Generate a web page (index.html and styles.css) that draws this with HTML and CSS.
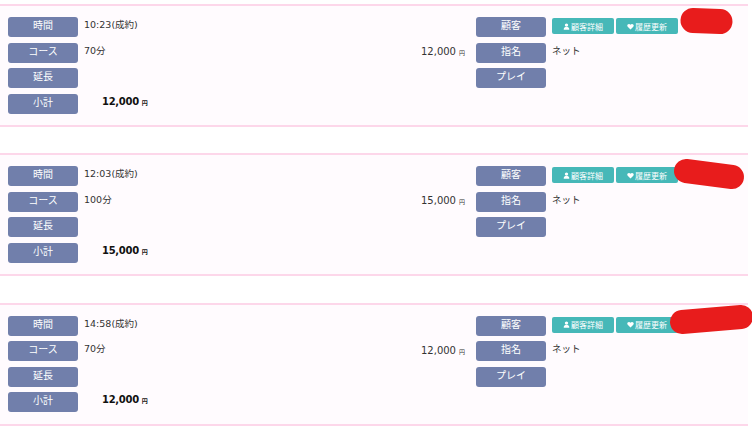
FILE: index.html
```html
<!DOCTYPE html>
<html lang="ja">
<head>
    <meta charset="UTF-8">
    <title>予約一覧</title>
    <link rel="stylesheet" href="styles.css">
</head>
<body>
    <div class="list">
        <div class="card">
            <div class="col">
                <div class="row"><span class="label">時間</span><span class="value">10:23(成約)</span></div>
                <div class="row"><span class="label">コース</span><span class="value">70分</span></div>
                <div class="row"><span class="label">延長</span></div>
                <div class="row"><span class="label">小計</span><span class="total">12,000<small>円</small></span></div>
            </div>
            <div class="price">12,000<small>円</small></div>
            <div class="col">
                <div class="row">
                    <span class="label">顧客</span>
                    <a class="btn"><svg viewBox="0 0 10 10"><circle cx="5" cy="3" r="2.4"/><path d="M1 9.5c0-3 1.6-3.8 4-3.8s4 .8 4 3.8z"/></svg>顧客詳細</a>
                    <a class="btn"><svg viewBox="0 0 10 10"><path d="M5 9.2 1 5.2C-.4 3.600.8 1.400 2.800 1.400 3.800 1.400 4.500 1.900 5 2.600 5.500 1.900 6.200 1.400 7.200 1.400c2 0 3.200 2.200 1.800 3.800z"/></svg>履歴更新</a>
                </div>
                <div class="row"><span class="label">指名</span><span class="value">ネット</span></div>
                <div class="row"><span class="label">プレイ</span></div>
            </div>
            <svg class="scribble scribble-thick" viewBox="0 0 752 123"><path d="M693 14.500 L720 15.500"/></svg>
        </div>

        <div class="card">
            <div class="col">
                <div class="row"><span class="label">時間</span><span class="value">12:03(成約)</span></div>
                <div class="row"><span class="label">コース</span><span class="value">100分</span></div>
                <div class="row"><span class="label">延長</span></div>
                <div class="row"><span class="label">小計</span><span class="total">15,000<small>円</small></span></div>
            </div>
            <div class="price">15,000<small>円</small></div>
            <div class="col">
                <div class="row">
                    <span class="label">顧客</span>
                    <a class="btn"><svg viewBox="0 0 10 10"><circle cx="5" cy="3" r="2.4"/><path d="M1 9.5c0-3 1.6-3.8 4-3.8s4 .8 4 3.8z"/></svg>顧客詳細</a>
                    <a class="btn"><svg viewBox="0 0 10 10"><path d="M5 9.2 1 5.2C-.4 3.600.8 1.400 2.800 1.400 3.800 1.400 4.500 1.900 5 2.600 5.500 1.900 6.200 1.400 7.200 1.400c2 0 3.200 2.200 1.800 3.800z"/></svg>履歴更新</a>
                </div>
                <div class="row"><span class="label">指名</span><span class="value">ネット</span></div>
                <div class="row"><span class="label">プレイ</span></div>
            </div>
            <svg class="scribble" viewBox="0 0 752 123"><path d="M686 16 L732 22"/></svg>
        </div>

        <div class="card">
            <div class="col">
                <div class="row"><span class="label">時間</span><span class="value">14:58(成約)</span></div>
                <div class="row"><span class="label">コース</span><span class="value">70分</span></div>
                <div class="row"><span class="label">延長</span></div>
                <div class="row"><span class="label">小計</span><span class="total">12,000<small>円</small></span></div>
            </div>
            <div class="price">12,000<small>円</small></div>
            <div class="col">
                <div class="row">
                    <span class="label">顧客</span>
                    <a class="btn"><svg viewBox="0 0 10 10"><circle cx="5" cy="3" r="2.4"/><path d="M1 9.5c0-3 1.6-3.8 4-3.8s4 .8 4 3.8z"/></svg>顧客詳細</a>
                    <a class="btn"><svg viewBox="0 0 10 10"><path d="M5 9.2 1 5.2C-.4 3.600.8 1.400 2.800 1.400 3.800 1.400 4.500 1.900 5 2.600 5.500 1.900 6.200 1.400 7.200 1.400c2 0 3.200 2.200 1.800 3.800z"/></svg>履歴更新</a>
                </div>
                <div class="row"><span class="label">指名</span><span class="value">ネット</span></div>
                <div class="row"><span class="label">プレイ</span></div>
            </div>
            <svg class="scribble" viewBox="0 0 752 123"><path d="M682 17 L741 12"/></svg>
        </div>
    </div>
</body>
</html>
```

FILE: styles.css
```css
body {
    margin: 0;
    background-color: #ffffff;
    font-family: 'DejaVu Sans', 'Noto Sans CJK JP', sans-serif;
    color: #333333;
}
.list {
    width: 748px;
    padding-top: 4px;
}
.card {
    position: relative;
    display: flex;
    box-sizing: border-box;
    height: 123px;
    margin-bottom: 26.400px;
    padding: 11px 0 0 8px;
    background-color: #fffbfe;
    border-top: 2px solid #fdd7ea;
    border-bottom: 2px solid #fdd7ea;
}
.col {
    display: flex;
    flex-direction: column;
    gap: 5.500px;
    width: 270px;
}
.row {
    display: flex;
    height: 20px;
}
.label {
    flex: none;
    width: 70px;
    height: 20px;
    margin-right: 6px;
    border-radius: 3px;
    background-color: #717fab;
    color: #ffffff;
    font-size: 10px;
    line-height: 18px;
    text-align: center;
}
.value {
    font-size: 9.500px;
    line-height: 16px;
}
.total {
    padding-left: 18px;
    color: #111111;
    font-size: 10px;
    font-weight: bold;
    letter-spacing: -0.300px;
    line-height: 16px;
}
.price {
    flex: none;
    width: 187px;
    margin-right: 11px;
    padding-top: 27px;
    font-size: 10px;
    line-height: 16px;
    text-align: right;
}
small {
    margin-left: 3px;
    font-size: 6px;
}
.btn {
    display: flex;
    justify-content: center;
    align-items: center;
    gap: 1px;
    box-sizing: border-box;
    width: 62px;
    height: 16px;
    margin: 1px 2px 0 0;
    border-radius: 2px;
    background-color: #46b8b8;
    color: #ffffff;
    font-size: 8px;
}
.btn svg {
    width: 7px;
    height: 7px;
    fill: #ffffff;
}
.scribble {
    position: absolute;
    top: 0;
    left: 0;
    width: 752px;
    height: 123px;
    overflow: visible;
}
.scribble path {
    fill: none;
    stroke: #e81c1c;
    stroke-width: 24;
    stroke-linecap: round;
}
.scribble-thick path {
    stroke-width: 25;
}
```
